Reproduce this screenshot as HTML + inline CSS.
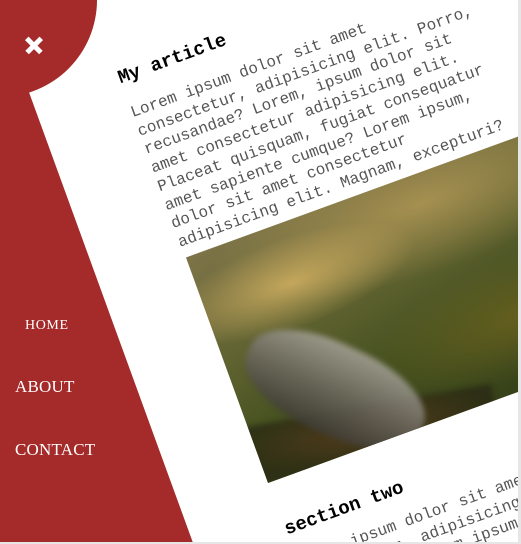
<!DOCTYPE html>
<html><head><meta charset="utf-8"><style>
html,body{margin:0;padding:0;width:521px;height:544px;overflow:hidden;background:#a52a2a;}
body{position:relative;font-family:"Liberation Mono","Courier New",monospace;}
.rot{position:absolute;left:30px;top:95px;width:800px;height:10px;transform-origin:0 0;transform:rotate(-20deg);}
.page{position:absolute;left:0;top:-400px;width:760px;height:1500px;background:#fff;}
h1{position:absolute;left:89px;top:4px;margin:0;font-size:19px;font-weight:bold;color:#000;line-height:22px;white-space:nowrap;}
.p{position:absolute;left:89px;top:43px;width:360px;margin:0;font-size:16px;line-height:19.7px;color:#555;}
.img{position:absolute;left:91px;top:206px;width:520px;height:240px;overflow:hidden;
background:
radial-gradient(ellipse 130px 45px at 90px 60px,rgba(215,180,100,.8),rgba(0,0,0,0) 100%),
radial-gradient(ellipse 220px 70px at 240px 30px,rgba(190,160,90,.7),rgba(0,0,0,0) 100%),
radial-gradient(ellipse 160px 60px at 300px 170px,rgba(130,110,30,.55),rgba(0,0,0,0) 100%),
linear-gradient(170deg,#7d7448 0%,#5f6230 35%,#44501f 60%,#2f3a17 100%);}
.rock{position:absolute;left:0px;top:130px;width:190px;height:90px;background:linear-gradient(180deg,#a8a49a,#6b675e 55%,#3e3c36);transform:rotate(45deg);border-radius:45%;opacity:.85;filter:blur(3px)}
.fol{position:absolute;left:-20px;top:200px;width:260px;height:60px;background:radial-gradient(ellipse at 50% 40%,#5a3a1c,#2a2a14 70%);transform:rotate(10deg);opacity:.8;filter:blur(3px)}
h2{position:absolute;left:91px;top:485px;margin:0;font-size:19px;font-weight:bold;color:#000;line-height:22px;white-space:nowrap;}
.p2{position:absolute;left:91px;top:521px;width:360px;margin:0;font-size:16px;line-height:19.7px;color:#555;}
.circle{position:absolute;left:-97px;top:-97px;width:194px;height:194px;border-radius:50%;background:#a52a2a;}
.x{position:absolute;left:25px;top:36px;width:18px;height:18px;}
.x:before,.x:after{content:"";position:absolute;left:-1px;top:7px;width:20px;height:4.5px;background:#fff;}
.x:before{transform:rotate(45deg)}.x:after{transform:rotate(-45deg)}
.nav{position:absolute;color:#fff;font-family:"Liberation Serif",serif;white-space:nowrap;}
.sb{position:absolute;right:0;top:0;width:3px;height:544px;background:#e6e6e6;}
.bb{position:absolute;left:0;bottom:0;width:521px;height:2px;background:#e6e6e6;}
</style></head><body>
<div class="rot"><div class="page"></div>
<h1>My article</h1>
<p class="p">Lorem ipsum dolor sit amet consectetur, adipisicing elit. Porro, recusandae? Lorem, ipsum dolor sit amet consectetur adipisicing elit. Placeat quisquam, fugiat consequatur amet sapiente cumque? Lorem ipsum, dolor sit amet consectetur adipisicing elit. Magnam, excepturi?</p>
<div class="img"><div class="fol"></div><div class="rock"></div></div>
<h2>section two</h2>
<p class="p2">Lorem ipsum dolor sit amet consectetur, adipisicing elit. Porro, recusandae? Lorem ipsum dolor sit amet.</p>
</div>
<div class="circle"></div>
<div class="x"></div>
<div class="nav" style="left:25px;top:318px;font-size:14px;letter-spacing:0.6px">HOME</div>
<div class="nav" style="left:15px;top:377px;font-size:17px;letter-spacing:0.2px">ABOUT</div>
<div class="nav" style="left:15px;top:440px;font-size:17px;letter-spacing:0.2px">CONTACT</div>
<div class="sb"></div><div class="bb"></div>
</body></html>
